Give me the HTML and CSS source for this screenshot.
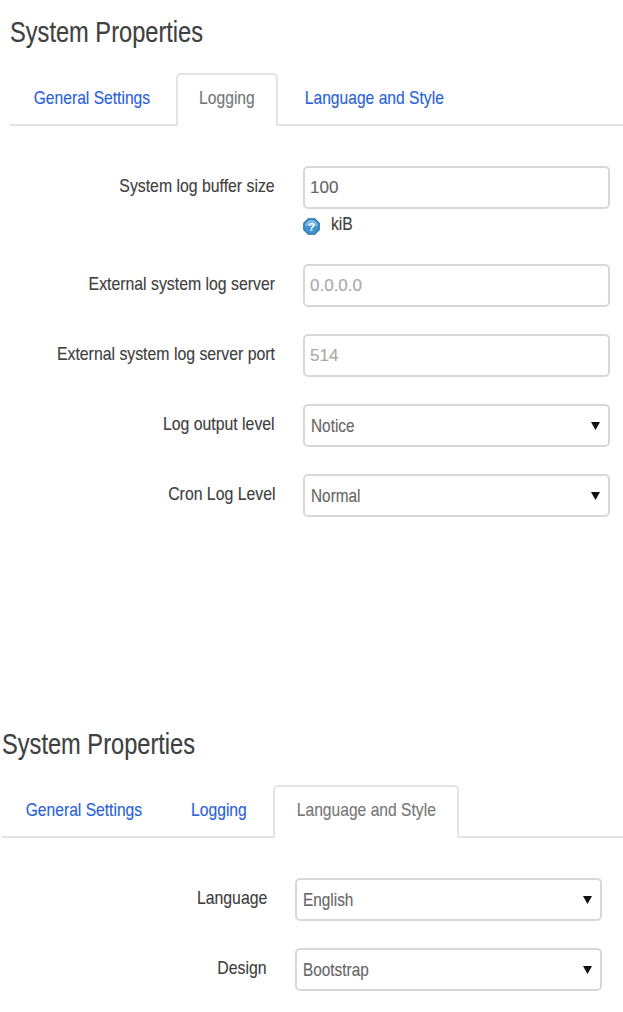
FILE: index.html
```html
<!DOCTYPE html>
<html lang="en">
<head>
    <meta charset="UTF-8">
    <meta name="viewport" content="width=device-width, initial-scale=1.0">
    <title>System Properties</title>
    <link rel="stylesheet" href="styles.css">
</head>
<body>
    <!-- Logging tab -->
    <section class="panel panel-logging">
        <h2 class="panel-title">System Properties</h2>
        <ul class="tabs">
            <li class="tab tab-general"><a href="#"><span>General Settings</span></a></li>
            <li class="tab tab-logging active"><a href="#"><span>Logging</span></a></li>
            <li class="tab tab-language"><a href="#"><span>Language and Style</span></a></li>
        </ul>
        <form class="fields">
            <div class="field">
                <label class="field-label"><span>System log buffer size</span></label>
                <div class="field-control">
                    <input class="text-input" type="text" value="100">
                    <div class="help">
                        <svg class="help-icon" width="17" height="17" viewBox="0 0 16 16">
                            <path d="M5 .7h6L15.300 5v6L11 15.300H5L.7 11V5z" fill="#3f93d1" stroke="#2d6d9e"/>
                            <path d="M5.500 2h5L13.800 5.300v2.200H2.200V5.300z" fill="#7fbde6"/>
                            <text x="8" y="12.500" text-anchor="middle" class="help-mark">?</text>
                        </svg>
                        <span class="help-text">kiB</span>
                    </div>
                </div>
            </div>
            <div class="field">
                <label class="field-label"><span>External system log server</span></label>
                <div class="field-control">
                    <input class="text-input" type="text" placeholder="0.0.0.0">
                </div>
            </div>
            <div class="field">
                <label class="field-label"><span>External system log server port</span></label>
                <div class="field-control">
                    <input class="text-input" type="text" placeholder="514">
                </div>
            </div>
            <div class="field">
                <label class="field-label"><span>Log output level</span></label>
                <div class="field-control">
                    <div class="text-input select-input"><span>Notice</span></div>
                </div>
            </div>
            <div class="field">
                <label class="field-label"><span>Cron Log Level</span></label>
                <div class="field-control">
                    <div class="text-input select-input"><span>Normal</span></div>
                </div>
            </div>
        </form>
    </section>

    <!-- Language and Style tab -->
    <section class="panel panel-language">
        <h2 class="panel-title">System Properties</h2>
        <ul class="tabs">
            <li class="tab tab-general"><a href="#"><span>General Settings</span></a></li>
            <li class="tab tab-logging"><a href="#"><span>Logging</span></a></li>
            <li class="tab tab-language active"><a href="#"><span>Language and Style</span></a></li>
        </ul>
        <form class="fields">
            <div class="field">
                <label class="field-label"><span>Language</span></label>
                <div class="field-control">
                    <div class="text-input select-input"><span>English</span></div>
                </div>
            </div>
            <div class="field">
                <label class="field-label"><span>Design</span></label>
                <div class="field-control">
                    <div class="text-input select-input"><span>Bootstrap</span></div>
                </div>
            </div>
        </form>
    </section>
</body>
</html>
```

FILE: styles.css
```css
/* General page styles */
body {
    margin: 0;
    background: #ffffff;
    color: #404040;
    font-family: "Liberation Sans", sans-serif;
    font-size: 18.5px;
    -webkit-text-stroke: 0.15px;
    overflow: hidden;
}

/* Each panel is a separate capture of the same page */
.panel-logging {
    height: 712px;
    padding-left: 10px;
}

.panel-language {
    padding-left: 2px;
}

/* The original UI font is condensed, so text is narrowed with scaleX */
.panel-title {
    margin: 0;
    padding-top: 16px;
    height: 73px;
    box-sizing: border-box;
    font-size: 29px;
    line-height: 32px;
    font-weight: normal;
    color: #404040;
    transform: scaleX(0.815);
    transform-origin: left;
}

/* Tabs */
.tabs {
    display: flex;
    margin: 0 0 40px;
    padding: 0;
    list-style: none;
    border-bottom: 2px solid #e4e4e4;
    height: 51px;
}

.tab {
    flex: none;
    box-sizing: border-box;
    margin-right: 2px;
    margin-bottom: -2px;
    border: 2px solid transparent;
    border-bottom: 0;
    border-radius: 5px 5px 0 0;
}

.tab-general {
    width: 164px;
}

.tab-logging {
    width: 102px;
    margin-right: 3px;
}

.tab-language {
    width: 186px;
}

.tab a {
    display: block;
    padding: 12px 0 18px;
    line-height: 21px;
    text-align: center;
    white-space: nowrap;
    color: #2a62d8;
    text-decoration: none;
}

.tab span {
    display: inline-block;
    transform: scaleX(0.845);
}

.tab.active {
    background: #ffffff;
    border-color: #e4e4e4;
}

.tab.active a {
    color: #777777;
}

/* Form rows */
.field {
    display: flex;
    align-items: flex-start;
    gap: 28px;
    margin-bottom: 27px;
}

.field-label {
    width: 265px;
    flex: none;
    text-align: right;
    line-height: 40px;
    white-space: nowrap;
    color: #404040;
}

.field-label span {
    display: inline-block;
    transform: scaleX(0.855);
    transform-origin: right;
}

.field-control {
    width: 307px;
    flex: none;
}

.text-input {
    display: block;
    width: 100%;
    height: 43px;
    box-sizing: border-box;
    padding: 0 5px;
    border: 2px solid #d8d8d8;
    border-radius: 5px;
    background: #ffffff;
    color: #666666;
    font-family: inherit;
    font-size: 17px;
}

.text-input::placeholder {
    color: #aaaaaa;
}

.select-input {
    padding-left: 6px;
    font-size: 18.5px;
    line-height: 39px;
    background-image: url("data:image/svg+xml,%3Csvg xmlns='http://www.w3.org/2000/svg' width='9' height='8'%3E%3Cpath d='M0 0h9L4.500 8z' fill='%23111'/%3E%3C/svg%3E");
    background-repeat: no-repeat;
    background-position: right 8px center;
}

.select-input span {
    display: inline-block;
    transform: scaleX(0.83);
    transform-origin: left;
}

/* Help text under the buffer size input */
.help {
    display: flex;
    align-items: center;
    gap: 11px;
    box-sizing: border-box;
    height: 28px;
    padding-top: 3px;
    line-height: 24px;
}

.help-icon {
    flex: none;
    margin-top: 4px;
}

.help-text {
    display: inline-block;
    margin-bottom: 2px;
    transform: scaleX(0.85);
    transform-origin: left;
}

.help-mark {
    fill: #ffffff;
    font-family: "Liberation Sans", sans-serif;
    font-size: 11px;
    font-weight: bold;
}
```
